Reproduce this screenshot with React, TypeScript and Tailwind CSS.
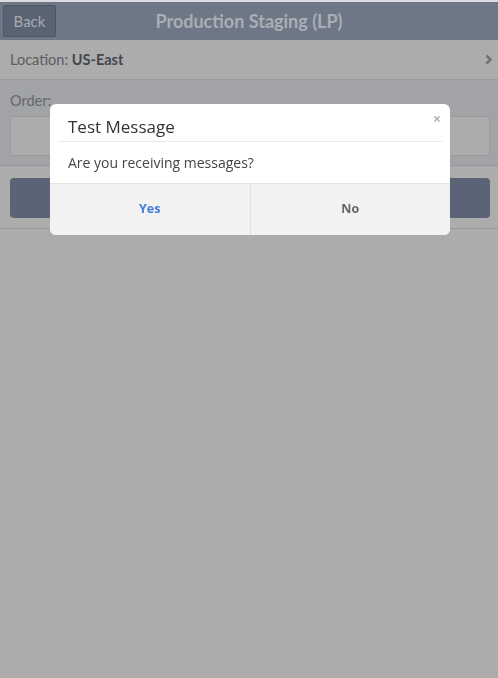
import React from "react";

// Dimmed page behind a confirm dialog
function Page() {
  return (
    <div className="min-h-[678px] bg-[#acacac] border-t-2 border-[#d9dce0]" style={{ fontFamily: "Lato, 'Open Sans', sans-serif" }}>
      <header className="h-[38px] bg-[#6d7785] flex items-center relative">
        <button className="absolute left-[3px] top-[3px] h-[32px] w-[53px] bg-[#5a6371] border border-[#4f5764] text-[#a6abb3] text-[15px] rounded-[2px]">
          Back
        </button>
        <h1 className="w-full text-center text-[18px] font-bold text-[#aaaeb5]">Production Staging (LP)</h1>
      </header>
      <div className="h-[40px] flex items-center justify-between pl-[10px] pr-[5px] border-b border-[#9b9b9b] text-[14.5px] text-[#595c62]">
        <span>
          Location: <span className="font-bold text-[#43464b]">US-East</span>
        </span>
        <svg width="8" height="11" viewBox="0 0 8 11">
          <path d="M1.5 1.5 L5.5 5.5 L1.5 9.5" fill="none" stroke="#707378" strokeWidth="2.6" />
        </svg>
      </div>
      <div className="bg-[#a2a3a7] pl-[10px] pr-[8px] pt-[12px] pb-[9px] border-b border-[#979797]">
        <div className="text-[14.5px] text-[#65676c] leading-[18px]">Order:</div>
        <div className="mt-[6px] h-[40px] bg-[#acacac] border border-[#9b9b9b]" />
      </div>
      <div className="pl-[10px] pr-[8px] pt-[12px] pb-[10px] border-b border-[#979797]">
        <div className="h-[40px] bg-[#5b6476] rounded-[4px]" />
      </div>
    </div>
  );
}

function Dialog() {
  return (
    <div className="fixed inset-0 flex pl-[50px] pt-[104px]" style={{ fontFamily: "'Open Sans', sans-serif" }}>
      <div className="w-[400px] h-[131px] bg-white rounded-[6px] overflow-hidden flex flex-col relative">
        <span className="absolute right-[9px] top-[8px] text-[14px] leading-[14px] font-bold text-[#b5b5b5]">×</span>
        <div className="mx-[8px] h-[38px] flex items-end pb-[3px] pl-[10px] border-b border-[#eaeaea]">
          <h2 className="text-[17px] leading-[22px] text-[#333]">Test Message</h2>
        </div>
        <p className="h-[41px] flex items-center px-[18px] text-[14px] text-[#444]">Are you receiving messages?</p>
        <div className="flex-1 flex bg-[#f2f2f2] border-t border-[#e3e3e3]">
          <button className="flex-1 text-[12.5px] font-bold text-[#3f7ddc] border-r border-[#e0e0e0]">Yes</button>
          <button className="flex-1 text-[12.5px] font-bold text-[#666]">No</button>
        </div>
      </div>
    </div>
  );
}

export default function App() {
  return (
    <div>
      <Page />
      <Dialog />
    </div>
  );
}
